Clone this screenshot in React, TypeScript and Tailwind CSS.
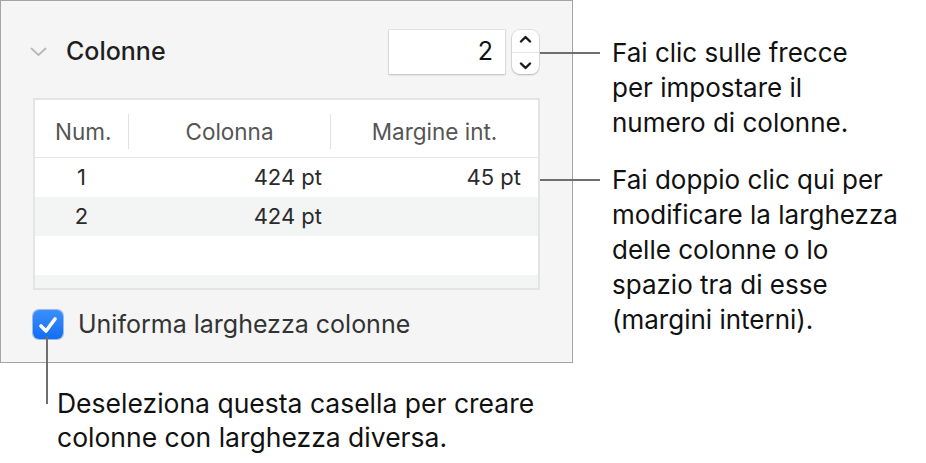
const font = { fontFamily: 'Inter, "Noto Sans", sans-serif' };

function Chevron({ up }: { up?: boolean }) {
  return (
    <svg width="13" height="8" viewBox="0 0 13 8" fill="none">
      <path
        d={up ? 'M2 6.5 L6.5 2 L11 6.5' : 'M2 1.5 L6.5 6 L11 1.5'}
        stroke="#1a1a1a"
        strokeWidth="2.4"
        strokeLinecap="round"
        strokeLinejoin="round"
      />
    </svg>
  );
}

function Stepper() {
  return (
    <div className="ml-[7px] flex h-[44px] w-[27px] flex-col items-center justify-around rounded-[8px] bg-white shadow-[0_0_0_1px_rgba(0,0,0,0.08),0_1px_2px_rgba(0,0,0,0.2)]">
      <Chevron up />
      <div className="h-px w-full bg-[#e3e3e3]" />
      <Chevron />
    </div>
  );
}

const rows = [
  { n: '1', col: '424 pt', gap: '45 pt', bg: 'bg-white' },
  { n: '2', col: '424 pt', gap: '', bg: 'bg-[#f3f4f4]' },
  { n: '', col: '', gap: '', bg: 'bg-white' },
  { n: '', col: '', gap: '', bg: 'bg-[#f3f4f4]' },
];

function ColumnsTable() {
  return (
    <div className="ml-[32px] h-[192px] w-[507px] overflow-hidden border-2 border-[#e4e4e4] bg-white">
      <div className="flex h-[58px] items-center border-b border-[#e6e6e6] pt-[6px] text-[22.5px] text-[#555]">
        <div className="w-[93px] pl-[20px]">Num.</div>
        <div className="h-[35px] w-px bg-[#e2e2e2]" />
        <div className="w-[201px] text-center">Colonna</div>
        <div className="h-[35px] w-px bg-[#e2e2e2]" />
        <div className="flex-1 text-center">Margine int.</div>
      </div>
      {rows.map((r, i) => (
        <div
          key={i}
          className={`flex h-[39px] items-center text-[22px] text-[#2a2a2a] ${r.bg}`}
        >
          <div className="w-[93px] text-center">{r.n}</div>
          <div className="w-[202px] pr-[8px] text-right">{r.col}</div>
          <div className="flex-1 pr-[17px] text-right">{r.gap}</div>
        </div>
      ))}
    </div>
  );
}

function Callout({ lines, className }: { lines: string[]; className?: string }) {
  return (
    <div className={`flex items-start ${className ?? ''}`}>
      <div className="mt-[17px] h-[2px] w-[60px] shrink-0 bg-[#6f6f6f]" />
      <p className="ml-[12px] text-[26px] leading-[35px] text-[#111]">
        {lines.map((l) => (
          <span key={l} className="block whitespace-nowrap">
            {l}
          </span>
        ))}
      </p>
    </div>
  );
}

export default function App() {
  return (
    <div className="flex h-[463px] w-[926px] overflow-hidden bg-white" style={font}>
      <div className="flex w-[573px] shrink-0 flex-col">
        <div className="h-[363px] border border-[#a4a4a4] bg-[#f5f5f5]">
          <div className="flex items-center pt-[29px] pl-[29px] pr-[33px]">
            <svg width="17" height="10" viewBox="0 0 17 10" fill="none">
              <path
                d="M1.5 1.5 L8.5 8 L15.5 1.5"
                stroke="#b8b8b8"
                strokeWidth="1.8"
                strokeLinecap="round"
                strokeLinejoin="round"
              />
            </svg>
            <span className="ml-[19px] text-[25px] font-medium text-[#1f1f1f]">
              Colonne
            </span>
            <div className="ml-auto flex h-[44px] w-[116px] items-center justify-end bg-white pr-[12px] text-[25px] text-[#111] shadow-[0_0_0_1px_rgba(0,0,0,0.06),0_1px_2px_rgba(0,0,0,0.18)]">
              2
            </div>
            <Stepper />
          </div>

          <div className="mt-[24px]">
            <ColumnsTable />
          </div>

          <div className="mt-[16px] flex items-center pl-[32px]">
            <div className="flex h-[29px] w-[30px] items-center justify-center rounded-[6px] bg-gradient-to-b from-[#3a8ffd] to-[#126df0] shadow-[0_0_0_1px_rgba(20,100,230,0.4)]">
              <svg width="20" height="18" viewBox="0 0 20 18" fill="none">
                <path
                  d="M3 10 L8 15 L17 3"
                  stroke="white"
                  strokeWidth="3.6"
                  strokeLinecap="round"
                  strokeLinejoin="round"
                />
              </svg>
            </div>
            <span className="ml-[15px] text-[25px] text-[#333]">
              Uniforma larghezza colonne
            </span>
          </div>
        </div>

        <div className="relative z-10 -mt-[27px] flex items-start pl-[46px]">
          <div className="h-[68px] w-[2px] shrink-0 bg-[#6f6f6f]" />
          <p className="mt-[50px] ml-[9px] text-[26.5px] leading-[34px] text-[#111]">
            <span className="block whitespace-nowrap">
              Deseleziona questa casella per creare
            </span>
            <span className="block whitespace-nowrap">
              colonne con larghezza diversa.
            </span>
          </p>
        </div>
      </div>

      <div className="relative z-10 -ml-[33px] flex flex-col">
        <Callout
          className="mt-[35px]"
          lines={['Fai clic sulle frecce', 'per impostare il', 'numero di colonne.']}
        />
        <Callout
          className="mt-[22px]"
          lines={[
            'Fai doppio clic qui per',
            'modificare la larghezza',
            'delle colonne o lo',
            'spazio tra di esse',
            '(margini interni).',
          ]}
        />
      </div>
    </div>
  );
}
